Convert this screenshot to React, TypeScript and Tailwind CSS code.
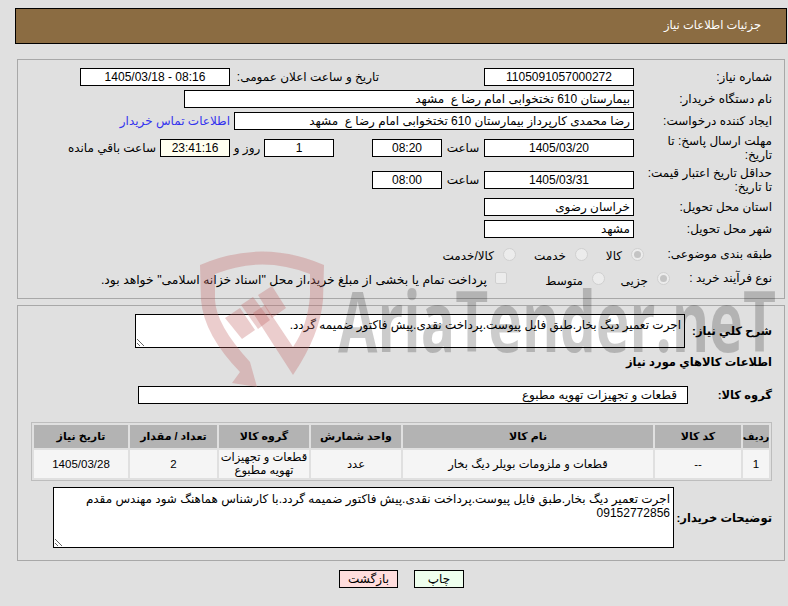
import type { ReactNode } from 'react';

function Field({ className, children }: { className: string; children?: ReactNode }) {
  return (
    <div className={`h-[18px] shrink-0 border border-black leading-[17px] whitespace-pre overflow-hidden ${className}`}>
      {children}
    </div>
  );
}

function Label({ className, children }: { className: string; children: ReactNode }) {
  return <div className={`shrink-0 text-right leading-[14px] ${className}`}>{children}</div>;
}

function Radio({ checked }: { checked?: boolean }) {
  return (
    <span className="w-[13px] h-[13px] shrink-0 rounded-full border border-[#d0d0d0] bg-[#ececec] flex items-center justify-center">
      {checked && <span className="w-[7px] h-[7px] rounded-full bg-[#c4c4c4]"></span>}
    </span>
  );
}

const columns = ['ردیف', 'کد کالا', 'نام کالا', 'واحد شمارش', 'گروه کالا', 'تعداد / مقدار', 'تاریخ نیاز'];
const cells = ['1', '--', 'قطعات و ملزومات بویلر دیگ بخار', 'عدد', 'قطعات و تجهیزات تهویه مطبوع', '2', '1405/03/28'];

export default function App() {
  return (
    <div
      dir="rtl"
      className="relative w-[788px] h-[606px] overflow-hidden bg-[#e0e0e0] pt-[8px] text-[12px] text-black font-['Liberation_Sans','DejaVu_Sans',sans-serif]"
    >
      {/* Header */}
      <div className="ml-[15px] mr-px h-[36px] border border-black bg-[#8b6c42] pr-[25px] flex items-center text-[11.5px] text-white">
        جزئیات اطلاعات نیاز
      </div>

      {/* Main info */}
      <div className="mt-[15px] ml-[17px] mr-[3px] h-[240px] border border-[#a8a8a8] pt-[8px] pr-[12px] flex flex-col gap-[4px]">
        <div className="flex items-center">
          <Label className="w-[138px]">شماره نیاز:</Label>
          <Field className="w-[150px] bg-white text-center">1105091057000272</Field>
          <Label className="w-[149px] mr-[105px]">تاریخ و ساعت اعلان عمومی:</Label>
          <div dir="ltr">
            <Field className="w-[150px] bg-white text-center">1405/03/18 - 08:16</Field>
          </div>
        </div>
        <div className="flex items-center">
          <Label className="w-[138px]">نام دستگاه خریدار:</Label>
          <Field className="w-[450px] bg-white px-[3px]">بیمارستان 610 تختخوابی امام رضا ع  مشهد</Field>
        </div>
        <div className="flex items-center">
          <Label className="w-[138px]">ایجاد کننده درخواست:</Label>
          <Field className="w-[400px] bg-white px-[3px]">رضا محمدی کارپرداز بیمارستان 610 تختخوابی امام رضا ع  مشهد</Field>
          <a className="mr-[4px] text-[#3333ee] whitespace-nowrap">اطلاعات تماس خریدار</a>
        </div>
        <div className="flex items-center h-[28px]">
          <Label className="w-[138px] pl-[8px]">مهلت ارسال پاسخ: تا تاریخ:</Label>
          <Field className="w-[150px] bg-white text-center">1405/03/20</Field>
          <div className="w-[42px] shrink-0 text-center">ساعت</div>
          <Field className="w-[70px] bg-white text-center">08:20</Field>
          <Field className="w-[70px] mr-[38px] bg-white text-center">1</Field>
          <div className="w-[34px] shrink-0 text-center">روز و</div>
          <Field className="w-[70px] text-center bg-[#fffff0]">23:41:16</Field>
          <div className="mr-[4px] whitespace-nowrap">ساعت باقي مانده</div>
        </div>
        <div className="flex items-center h-[28px]">
          <Label className="w-[138px] pl-[8px]">حداقل تاریخ اعتبار قیمت: تا تاریخ:</Label>
          <Field className="w-[150px] bg-white text-center">1405/03/31</Field>
          <div className="w-[42px] shrink-0 text-center">ساعت</div>
          <Field className="w-[70px] bg-white text-center">08:00</Field>
        </div>
        <div className="flex items-center">
          <Label className="w-[138px]">استان محل تحویل:</Label>
          <Field className="w-[150px] px-[3px] bg-white">خراسان رضوی</Field>
        </div>
        <div className="flex items-center">
          <Label className="w-[138px]">شهر محل تحویل:</Label>
          <Field className="w-[150px] px-[3px] bg-white">مشهد</Field>
        </div>
        <div className="flex items-center h-[24px]">
          <Label className="w-[128px]">طبقه بندی موضوعی:</Label>
          <Radio checked />
          <span className="w-[16px] mr-[9px] mt-[3px]">کالا</span>
          <span className="mr-[18px]"><Radio /></span>
          <span className="w-[32px] mr-[9px] mt-[3px]">خدمت</span>
          <span className="mr-[18px]"><Radio /></span>
          <span className="mr-[9px] mt-[3px]">کالا/خدمت</span>
        </div>
        <div className="flex items-center h-[16px]">
          <Label className="w-[102px]">نوع فرآیند خرید :</Label>
          <Radio checked />
          <span className="w-[28px] mr-[9px] mt-[5px]">جزیی</span>
          <span className="mr-[15px]"><Radio /></span>
          <span className="w-[36px] mr-[9px] mt-[5px]">متوسط</span>
          <span className="w-[12px] h-[12px] mr-[40px] shrink-0 rounded-[2px] border border-[#d0d0d0] bg-[#ececec]"></span>
          <span className="mr-[8px] mt-[4px] text-[12.4px] whitespace-nowrap">پرداخت تمام یا بخشی از مبلغ خرید،از محل "اسناد خزانه اسلامی" خواهد بود.</span>
        </div>
      </div>

      {/* Description, group, items */}
      <div className="mt-[6px] ml-[17px] mr-[3px] h-[256px] border border-[#a8a8a8] pt-[8px] pr-[12px] flex flex-col">
        <div className="flex items-center">
          <Label className="w-[87px] font-bold text-[11.5px]">شرح کلي نیاز:</Label>
          <textarea
            readOnly
            className="w-[550px] h-[34px] resize border border-black bg-white px-[3px] pt-[3px] text-[12px] leading-[15px] outline-none"
            defaultValue="اجرت تعمیر دیگ بخار.طبق فایل پیوست.پرداخت نقدی.پیش فاکتور ضمیمه گردد."
          />
        </div>
        <div className="mt-[6px] h-[16px] leading-[16px] font-bold text-[11.5px]">اطلاعات کالاهاي مورد نیاز</div>
        <div className="mt-[16px] flex items-center">
          <Label className="w-[84px] font-bold text-[11.5px]">گروه کالا:</Label>
          <Field className="w-[550px] pr-[10px] bg-white">قطعات و تجهیزات تهویه مطبوع</Field>
        </div>
        <div className="mt-[18px] w-[741px] border border-[#bdbdbd] p-[2px] grid grid-cols-[26px_86px_250px_90px_90px_87px_94px] grid-rows-[23px_28px] gap-[2px]">
          {columns.map((c, i) => (
            <div key={c} className={`bg-[#b3b3b3] flex items-center justify-center font-bold whitespace-nowrap ${i === 0 ? 'text-[10px]' : 'text-[11px]'}`}>
              {c}
            </div>
          ))}
          {cells.map((c) => (
            <div key={c} className="bg-[#f5f5f5] flex items-center justify-center text-center leading-[13px] text-[11.5px]">
              {c}
            </div>
          ))}
        </div>
        <div className="mt-[6px] flex items-center">
          <Label className="w-[98px] font-bold text-[11.5px] whitespace-nowrap">توضیحات خریدار:</Label>
          <textarea
            readOnly
            className="w-[621px] h-[61px] resize border border-black bg-white px-[3px] pt-[4px] text-[12px] leading-[14px] outline-none"
            defaultValue={'اجرت تعمیر دیگ بخار.طبق فایل پیوست.پرداخت نقدی.پیش فاکتور ضمیمه گردد.با کارشناس هماهنگ شود مهندس مقدم\n09152772856'}
          />
        </div>
      </div>

      {/* Buttons */}
      <div className="mt-[9px] mr-[324px] flex gap-[16px]">
        <button className="w-[50px] h-[18px] border border-black bg-[#eeffee] leading-[14px]">چاپ</button>
        <button className="w-[59px] h-[18px] border border-black bg-[#ffdddd] leading-[14px]">بازگشت</button>
      </div>

      {/* Watermark over the page */}
      <svg className="absolute left-0 top-0 pointer-events-none" width="788" height="606" viewBox="0 0 788 606">
        <g fill="#c06464" fillOpacity="0.32">
          <path fillRule="evenodd" d="M200 265 Q262 238 324 265 L323 300 Q320 335 293 375 L253 313 L265 305 L293 347 Q308 325 310 295 L310 274 Q262 255 215 274 L215 300 Q216 325 250 362 L257 387 L232 383 L240 372 Q204 335 201 300 Z" />
          <path d="M225 318 L240 308 L255 330 L242 339 Z" />
          <path d="M241 305 L253 297 L270 320 L258 329 Z" />
          <path d="M258 295 L272 286 L286 308 L272 318 Z" />
        </g>
      </svg>
      <div
        dir="ltr"
        className="absolute left-[338px] top-[270px] pointer-events-none origin-left scale-x-[0.68] text-[84px] leading-[100px] font-bold text-black/20 whitespace-nowrap font-['Open_Sans',sans-serif]"
      >
        AriaTender.neT
      </div>
    </div>
  );
}
